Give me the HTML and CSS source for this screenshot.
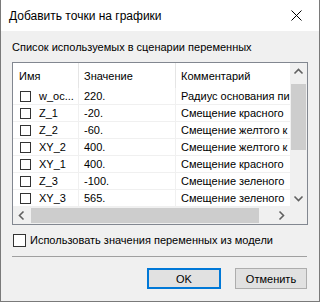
FILE: index.html
```html
<!DOCTYPE html>
<html lang="ru">
<head>
  <meta charset="UTF-8">
  <title>Добавить точки на графики</title>
  <link rel="stylesheet" href="styles.css">
</head>
<body>
  <div class="window">
    <div class="titlebar">
      <span class="title">Добавить точки на графики</span>
      <svg class="close" width="11" height="11" viewBox="0 0 11 11">
        <path d="M0.5 0.5 L10.5 10.5 M10.5 0.5 L0.5 10.5" stroke="#000" stroke-width="1" fill="none"/>
      </svg>
    </div>

    <div class="content">
      <div class="caption">Список используемых в сценарии переменных</div>

      <div class="list">
        <div class="view">
          <div class="row head">
            <div class="cell c1">Имя</div>
            <div class="cell c2">Значение</div>
            <div class="cell c3">Комментарий</div>
          </div>
          <div class="row">
            <div class="cell c1"><span class="box"></span>w_oc...</div>
            <div class="cell c2">220.</div>
            <div class="cell c3">Радиус основания пи</div>
          </div>
          <div class="row">
            <div class="cell c1"><span class="box"></span>Z_1</div>
            <div class="cell c2">-20.</div>
            <div class="cell c3">Смещение красного</div>
          </div>
          <div class="row">
            <div class="cell c1"><span class="box"></span>Z_2</div>
            <div class="cell c2">-60.</div>
            <div class="cell c3">Смещение желтого к</div>
          </div>
          <div class="row">
            <div class="cell c1"><span class="box"></span>XY_2</div>
            <div class="cell c2">400.</div>
            <div class="cell c3">Смещение желтого к</div>
          </div>
          <div class="row">
            <div class="cell c1"><span class="box"></span>XY_1</div>
            <div class="cell c2">400.</div>
            <div class="cell c3">Смещение красного</div>
          </div>
          <div class="row">
            <div class="cell c1"><span class="box"></span>Z_3</div>
            <div class="cell c2">-100.</div>
            <div class="cell c3">Смещение зеленого</div>
          </div>
          <div class="row">
            <div class="cell c1"><span class="box"></span>XY_3</div>
            <div class="cell c2">565.</div>
            <div class="cell c3">Смещение зеленого</div>
          </div>
        </div>

        <div class="vscroll">
          <svg class="arrow" width="17" height="17" viewBox="0 0 17 17">
            <path d="M4.5 10.5 L8.5 6.5 L12.5 10.5" stroke="#606060" stroke-width="1.6" fill="none"/>
          </svg>
          <div class="track-v"><div class="thumb-v"></div></div>
          <svg class="arrow" width="17" height="17" viewBox="0 0 17 17">
            <path d="M4.5 6.5 L8.5 10.5 L12.5 6.5" stroke="#606060" stroke-width="1.6" fill="none"/>
          </svg>
        </div>

        <div class="hscroll">
          <svg class="arrow" width="17" height="17" viewBox="0 0 17 17">
            <path d="M10.5 4.5 L6.5 8.5 L10.5 12.5" stroke="#606060" stroke-width="1.6" fill="none"/>
          </svg>
          <div class="track-h"><div class="thumb-h"></div></div>
          <svg class="arrow" width="17" height="17" viewBox="0 0 17 17">
            <path d="M6.5 4.5 L10.5 8.5 L6.5 12.5" stroke="#606060" stroke-width="1.6" fill="none"/>
          </svg>
        </div>
        <div class="corner"></div>
      </div>

      <label class="check">
        <span class="box big"></span>
        Использовать значения переменных из модели
      </label>

      <div class="sep"></div>

      <div class="buttons">
        <button class="btn default">OK</button>
        <button class="btn">Отменить</button>
      </div>
    </div>
  </div>
</body>
</html>
```

FILE: styles.css
```css
body {
  margin: 0;
  font-family: 'Liberation Sans', Arial, sans-serif;
  font-size: 11px;
  color: #000;
  background: #f0f0f0;
}

.window {
  width: 320px;
  height: 302px;
  box-sizing: border-box;
  border: 1px solid #7a7a7a;
  border-top: none;
  background: #f0f0f0;
  display: flex;
  flex-direction: column;
}

.titlebar {
  height: 31px;
  background: #fff;
  display: flex;
  align-items: center;
  justify-content: space-between;
  padding: 0 17px 0 8px;
  flex-shrink: 0;
}

.title {
  font-size: 12px;
}

.content {
  padding: 0 12px 0 11px;
  display: flex;
  flex-direction: column;
}

.caption {
  height: 31px;
  line-height: 32px;
  white-space: nowrap;
}

/* list view */
.list {
  width: 296px;
  height: 163px;
  box-sizing: border-box;
  border: 1px solid #828790;
  background: #fff;
  display: grid;
  grid-template-columns: 277px 17px;
  grid-template-rows: 144px 17px;
}

.view {
  overflow: hidden;
}

.row {
  display: grid;
  grid-template-columns: 66px 97px 114px;
  height: 17px;
  box-sizing: border-box;
  border-bottom: 1px solid #f0f0f0;
}

.row.head {
  height: 25px;
  border-bottom: none;
}

.cell {
  white-space: nowrap;
  overflow: hidden;
  display: flex;
  align-items: center;
  border-right: 1px solid #f0f0f0;
}

.head .cell {
  border-right-color: #e5e5e5;
}

.c1 { padding-left: 7px; }
.c2 { padding-left: 5px; }
.c3 { padding-left: 5px; border-right: none; }

.head .c1 { padding-left: 6px; }

.box {
  display: inline-block;
  width: 9px;
  height: 9px;
  border: 1px solid #333;
  background: #fff;
  margin-right: 8px;
  flex-shrink: 0;
}

.box.big {
  width: 11px;
  height: 11px;
  margin-right: 4px;
}

/* scrollbars */
.vscroll {
  background: #f0f0f0;
  display: flex;
  flex-direction: column;
}

.track-v {
  flex: 1;
  padding-top: 4px;
}

.thumb-v {
  width: 15px;
  margin-left: 1px;
  height: 66px;
  background: #cdcdcd;
}

.hscroll {
  background: #f0f0f0;
  display: flex;
}

.track-h {
  flex: 1;
  padding-left: 1px;
  display: flex;
  align-items: center;
}

.thumb-h {
  width: 228px;
  height: 15px;
  background: #cdcdcd;
}

.arrow {
  display: block;
  flex-shrink: 0;
}

.corner {
  background: #f0f0f0;
}

/* footer */
.check {
  display: flex;
  align-items: center;
  height: 30px;
  padding-left: 1px;
  white-space: nowrap;
}

.sep {
  height: 1px;
  background: #a0a0a0;
  margin-top: 1px;
  width: 295px;
}

.buttons {
  display: flex;
  justify-content: flex-end;
  gap: 14px;
  padding-top: 11px;
}

.btn {
  font-family: inherit;
  font-size: 11px;
  height: 21px;
  width: 72px;
  padding: 0;
  background: #e1e1e1;
  border: 1px solid #adadad;
  color: #000;
}

.btn.default {
  width: 74px;
  border: 2px solid #0078d7;
}
```
